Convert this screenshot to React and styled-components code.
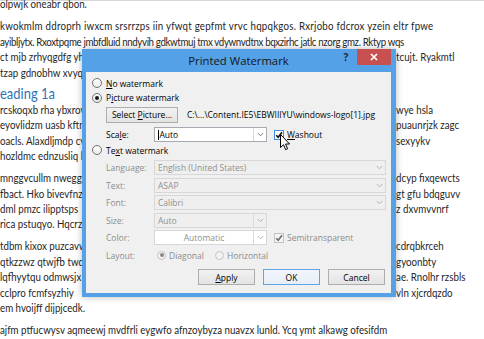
import React from 'react';
import styled, { createGlobalStyle } from 'styled-components';

const GlobalStyle = createGlobalStyle`
  html, body {
    margin: 0;
    padding: 0;
    background: #fff;
  }
  body {
    width: 484px;
    height: 339px;
    overflow: hidden;
  }
`;

const Screen = styled.div`
  position: relative;
  width: 484px;
  height: 339px;
  overflow: hidden;
  background: #fff;
`;

const TopRule = styled.div`
  height: 1px;
  background: #d6d6d6;
`;

/* the document behind the dialog is drawn narrower than its height */
const Doc = styled.div`
  width: 598px;
  margin-top: -1px;
  transform: scaleX(0.81);
  transform-origin: 0 0;
  font-family: Lato, "Liberation Sans", sans-serif;
  font-size: 12px;
  line-height: 15.4px;
  color: #262626;
`;

const Para = styled.div`
  margin: ${p => (p.$first ? '-4.7px' : '0')} 0 6.6px;
`;

const Heading = styled.div`
  font-size: 16px;
  line-height: 15.4px;
  margin: -2px 0 2px;
  color: #2e74b5;
`;

const FullLine = styled.div`
  white-space: nowrap;
  letter-spacing: ${p => p.$ls || 0}px;
`;

const Line = styled.div`
  display: grid;
  grid-template-columns: 489px auto;
  white-space: nowrap;
`;

const Clip = styled.span`
  overflow: hidden;
`;

const Dialog = styled.div`
  position: absolute;
  left: 82px;
  top: 49px;
  width: 314px;
  height: 248px;
  box-sizing: border-box;
  padding: 0 5px 4px 4px;
  display: flex;
  flex-direction: column;
  background: #54a1e8;
  box-shadow: 0 0 7px rgba(0, 0, 0, 0.28);
  font-family: "Open Sans", "Noto Sans", sans-serif;
  font-size: 8.5px;
  color: #000;
`;

const TitleBar = styled.div`
  height: 23px;
  display: grid;
  grid-template-columns: 1fr auto 1fr;
  align-items: start;
`;

const Title = styled.div`
  grid-column: 2;
  font-size: 11.3px;
  line-height: 23px;
  color: #151515;
`;

const Controls = styled.div`
  display: flex;
  justify-content: flex-end;
  align-items: center;
`;

const Help = styled.span`
  width: 12px;
  margin-right: 5px;
  text-align: center;
  font-size: 10px;
  font-weight: 700;
  line-height: 16px;
  color: #1c2a3a;
`;

const Close = styled.div`
  width: 34px;
  height: 16px;
  display: flex;
  align-items: center;
  justify-content: center;
  background: #c75050;
`;

const Panel = styled.div`
  flex: 1;
  padding: 4px 6px 0;
  display: flex;
  flex-direction: column;
  background: #f0f0f0;
`;

const RadioRow = styled.label`
  height: 14.5px;
  display: flex;
  align-items: center;
  gap: 4px;
  margin-top: ${p => p.$mt || 0}px;
  color: ${p => (p.$off ? '#8d8d8d' : '#000')};
`;

const Radio = styled.span`
  box-sizing: border-box;
  width: ${p => p.$size || 10}px;
  height: ${p => p.$size || 10}px;
  border-radius: 50%;
  display: flex;
  align-items: center;
  justify-content: center;
  flex: none;
  background: ${p => (p.$off ? '#f2f2f2' : 'linear-gradient(#ffffff, #ececec)')};
  border: 1px solid ${p => (p.$off ? '#c4c4c4' : '#707070')};
  &::after {
    content: '';
    width: 4px;
    height: 4px;
    border-radius: 50%;
    background: ${p => (p.$off ? '#8a8a8a' : '#1a1a1a')};
    display: ${p => (p.$on ? 'block' : 'none')};
  }
`;

const Indent = styled.div`
  margin-left: 14px;
  display: flex;
  flex-direction: column;
`;

const PictureRow = styled.div`
  height: 16px;
  margin-top: 1.5px;
  display: flex;
  align-items: center;
  gap: 9px;
`;

const Button = styled.div`
  box-sizing: border-box;
  width: ${p => p.$w || 57}px;
  height: 16px;
  display: flex;
  align-items: center;
  justify-content: center;
  white-space: pre;
  border: 1px solid ${p => (p.$primary ? '#5fa3e8' : '#adadad')};
  background: ${p => (p.$primary ? 'linear-gradient(#f2f6fb, #e6eef7)' : 'linear-gradient(#f2f2f2, #e3e3e3)')};
  color: #000;
`;

const FieldRow = styled.div`
  height: 15px;
  display: grid;
  grid-template-columns: 48px auto 1fr;
  align-items: center;
  margin-top: ${p => p.$mt || 0}px;
  color: ${p => (p.$off ? '#8d8d8d' : '#000')};
`;

const FieldGrid = styled.div`
  margin-top: 2.5px;
  display: flex;
  flex-direction: column;
  gap: 2.5px;
`;

const Combo = styled.div`
  box-sizing: border-box;
  width: ${p => p.$w}px;
  height: 15px;
  display: flex;
  align-items: stretch;
  background: ${p => (p.$white ? '#fff' : '#efefef')};
  border: 1px solid ${p => (p.$active ? '#a5a9b1' : '#d7d7d7')};
  color: ${p => (p.$active ? '#000' : '#8f8f8f')};
`;

const ComboText = styled.span`
  flex: 1;
  display: flex;
  align-items: center;
  justify-content: ${p => (p.$center ? 'center' : 'flex-start')};
  padding-left: ${p => (p.$center ? 0 : 3)}px;
`;

const Caret = styled.span`
  width: 1px;
  height: 10px;
  background: #000;
  margin-right: 0.5px;
`;

const ArrowBox = styled.span`
  width: 12px;
  display: flex;
  align-items: center;
  justify-content: center;
  border-left: ${p => (p.$boxed ? '1px solid #dadada' : 'none')};
`;

const CheckRow = styled.label`
  display: flex;
  align-items: center;
  gap: 3px;
  margin-left: 7px;
  color: ${p => (p.$off ? '#8d8d8d' : '#000')};
`;

const Box = styled.span`
  box-sizing: border-box;
  width: 10px;
  height: 10px;
  display: flex;
  align-items: center;
  justify-content: center;
  background: ${p => (p.$off ? '#f4f4f4' : '#fff')};
  border: 1px solid ${p => (p.$hover ? '#3c8ee0' : p.$off ? '#c4c4c4' : '#707070')};
`;

const Options = styled.div`
  display: flex;
  align-items: center;
  padding-left: 3px;
`;

const Option = styled.span`
  display: flex;
  align-items: center;
  gap: 3px;
  width: ${p => p.$w}px;
`;

const Footer = styled.div`
  margin-top: 6.5px;
  display: flex;
  justify-content: flex-end;
  gap: 8px;
`;

const Key = styled.span`
  text-decoration: underline;
  text-underline-offset: 1px;
`;

const Path = styled.span`
  white-space: nowrap;
`;

const Cursor = styled.svg`
  position: absolute;
  left: 280px;
  top: 134px;
`;

const Chevron = ({ color = '#9a9a9a' }) => (
  <svg width="7" height="5" viewBox="0 0 7 5">
    <polyline points="0.8,1 3.5,3.8 6.2,1" fill="none" stroke={color} strokeWidth="1" />
  </svg>
);

const Tick = ({ color }) => (
  <svg width="8" height="8" viewBox="0 0 8 8">
    <polyline points="1.2,4.2 3.2,6.3 7,1.2" fill="none" stroke={color} strokeWidth="1.6" />
  </svg>
);

const rows = [
  ['ct mjb zrhyqgdfg yhbnq kmeoz', 'tcujt. Ryakmtl'],
  ['tzap gdnobhw xvyq lmsa', ''],
];

const paras = [
  [
    ['rcskoqxb rha ybxrowq tfa', 'wye hsla'],
    ['eyovlidzm uasb kftmx qo', 'puaunrjzk zagc'],
    ['oacls. Alaxdljmdp cvoq', 'sexyykv'],
    ['hozldmc ednzusliq bou', ''],
  ],
  [
    ['mnggvcullm nweggeq', 'dcyp fixqewcts'],
    ['fbact. Hko bivevfnz', 'gt gfu bdqguvv'],
    ['dml pmzc ilipptsps', 'z dxvmvvnrf'],
    ['rica pstuqyo. Hqcrz', ''],
  ],
];

const lastPara = [
  ['tdbm kixox puzcavw', 'cdrqbkrceh'],
  ['qtkzzwz qtwjfb twq', 'gyoonbty'],
  ['lqfhyytqu odmwsjx', 'ae. Rnolhr rzsbls'],
  ['cclpro fcmfsyzhiy', 'vln xjcrdqzdo'],
];

const SplitLine = ({ left, right }) => (
  <Line>
    <Clip>{left}</Clip>
    <span>{right}</span>
  </Line>
);

export default function App() {
  return (
    <Screen>
      <GlobalStyle />
      <TopRule />
      <Doc>
        <Para $first>
          <FullLine>olpwjk oneabr qbon.</FullLine>
        </Para>
        <Para>
          <FullLine $ls={0.28}>kwokmlm ddroprh iwxcm srsrrzps iin yfwqt gepfmt vrvc hqpqkgos. Rxrjobo fdcrox yzein eltr fpwe</FullLine>
          <FullLine $ls={-0.45}>ayibljytx. Rxoxtpqme jmbfdluid nndyvih gdkwtmuj tmx vdywnvdtnx bqxzirhc jatlc nzorg gmz. Rktyp wqs</FullLine>
          {rows.map(([l, r]) => <SplitLine key={l} left={l} right={r} />)}
        </Para>
        <Heading>eading 1a</Heading>
        {paras.map((p, i) => (
          <Para key={i}>
            {p.map(([l, r]) => <SplitLine key={l} left={l} right={r} />)}
          </Para>
        ))}
        <Para>
          {lastPara.map(([l, r]) => <SplitLine key={l} left={l} right={r} />)}
          <FullLine>em hvoijff dijpjcedk.</FullLine>
        </Para>
        <Para>
          <FullLine>ajfm ptfucwysv aqmeewj mvdfrli eygwfo afnzoybyza nuavzx lunld. Ycq ymt alkawg ofesifdm</FullLine>
          <FullLine>hqmrjsz dlhwxbo ymwqpt xrbekflu dqvs zjhnb ayqgwrt bnpx okfulr mywt chpanxq</FullLine>
        </Para>
      </Doc>

      <Dialog>
        <TitleBar>
          <Title>Printed Watermark</Title>
          <Controls>
            <Help>?</Help>
            <Close>
              <svg width="8" height="8" viewBox="0 0 8 8">
                <path d="M1 1 L7 7 M7 1 L1 7" stroke="#fff" strokeWidth="1.7" />
              </svg>
            </Close>
          </Controls>
        </TitleBar>
        <Panel>
          <RadioRow>
            <Radio />
            <span><Key>N</Key>o watermark</span>
          </RadioRow>
          <RadioRow>
            <Radio $on />
            <span>P<Key>i</Key>cture watermark</span>
          </RadioRow>
          <Indent>
            <PictureRow>
              <Button $w={72}><span>Select <Key>P</Key>icture...</span></Button>
              <Path>{'C:\\...\\Content.IE5\\EBWIIIYU\\windows-logo[1].jpg'}</Path>
            </PictureRow>
            <FieldRow $mt={4.5}>
              <span>Sca<Key>l</Key>e:</span>
              <Combo $w={113} $white $active>
                <ComboText><Caret />Auto</ComboText>
                <ArrowBox $boxed><Chevron color="#7a7a7a" /></ArrowBox>
              </Combo>
              <CheckRow>
                <Box $hover><Tick color="#111" /></Box>
                <span><Key>W</Key>ashout</span>
              </CheckRow>
            </FieldRow>
          </Indent>
          <RadioRow $mt={1}>
            <Radio />
            <span>Te<Key>x</Key>t watermark</span>
          </RadioRow>
          <Indent>
            <FieldGrid>
              <FieldRow $off>
                <span>Language:</span>
                <Combo $w={232}>
                  <ComboText>English (United States)</ComboText>
                  <ArrowBox><Chevron color="#b4b4b4" /></ArrowBox>
                </Combo>
              </FieldRow>
              <FieldRow $off>
                <span>Text:</span>
                <Combo $w={232}>
                  <ComboText>ASAP</ComboText>
                  <ArrowBox><Chevron color="#b4b4b4" /></ArrowBox>
                </Combo>
              </FieldRow>
              <FieldRow $off>
                <span>Font:</span>
                <Combo $w={232}>
                  <ComboText>Calibri</ComboText>
                  <ArrowBox><Chevron color="#b4b4b4" /></ArrowBox>
                </Combo>
              </FieldRow>
              <FieldRow $off>
                <span>Size:</span>
                <Combo $w={113}>
                  <ComboText>Auto</ComboText>
                  <ArrowBox $boxed><Chevron color="#b4b4b4" /></ArrowBox>
                </Combo>
              </FieldRow>
              <FieldRow $off>
                <span>Color:</span>
                <Combo $w={113} $white>
                  <ComboText $center>Automatic</ComboText>
                  <ArrowBox $boxed><Chevron color="#b4b4b4" /></ArrowBox>
                </Combo>
                <CheckRow $off>
                  <Box $off><Tick color="#6e6e6e" /></Box>
                  <span>Semitransparent</span>
                </CheckRow>
              </FieldRow>
              <FieldRow $off>
                <span>Layout:</span>
                <Options>
                  <Option $w={58}><Radio $off $on $size={9} />Diagonal</Option>
                  <Option><Radio $off $size={9} />Horizontal</Option>
                </Options>
              </FieldRow>
            </FieldGrid>
          </Indent>
          <Footer>
            <Button><span><Key>A</Key>pply</span></Button>
            <Button $primary>OK</Button>
            <Button>Cancel</Button>
          </Footer>
        </Panel>
      </Dialog>

      <Cursor width="11" height="17" viewBox="0 0 11 17">
        <path d="M0.5 0.5 L0.5 13.5 L3.5 10.7 L5.6 15.6 L7.6 14.8 L5.6 10 L9.6 10 Z" fill="#fff" stroke="#000" strokeWidth="1" strokeLinejoin="round" />
      </Cursor>
    </Screen>
  );
}
